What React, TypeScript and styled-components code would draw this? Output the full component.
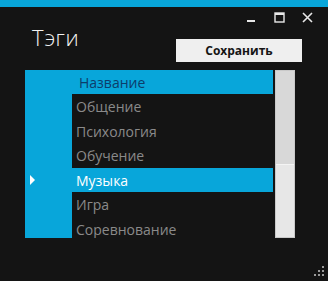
import React from 'react';
import styled, { createGlobalStyle } from 'styled-components';

const GlobalStyle = createGlobalStyle`
  html, body {
    margin: 0;
    padding: 0;
    background: #141414;
  }
  * {
    box-sizing: border-box;
  }
`;

const Window = styled.div`
  position: relative;
  width: 328px;
  height: 281px;
  background: #141414;
  display: flex;
  flex-direction: column;
  font-family: 'Open Sans', 'Noto Sans', sans-serif;
  overflow: hidden;
`;

const AccentBar = styled.div`
  height: 7px;
  background: #08a6da;
`;

const Controls = styled.div`
  display: flex;
  justify-content: flex-end;
  align-items: center;
  gap: 17px;
  height: 17px;
  padding: 4px 15px 0 0;
`;

const ControlButton = styled.div`
  width: 11px;
  height: 11px;
  display: flex;
  align-items: center;
  justify-content: center;
`;

const Header = styled.div`
  display: flex;
  justify-content: space-between;
  align-items: flex-start;
  padding: 0 26px 0 32px;
  height: 46px;
`;

const Title = styled.h1`
  margin: 0;
  font-family: 'Open Sans', 'Noto Sans', sans-serif;
  font-weight: 300;
  font-size: 22px;
  letter-spacing: 0.6px;
  line-height: 26px;
  color: #f2f2f2;
`;

const SaveButton = styled.button`
  margin-top: 15px;
  width: 126px;
  height: 23px;
  border: none;
  background: #efefef;
  color: #151515;
  font-family: 'Open Sans', 'Noto Sans', sans-serif;
  font-weight: 700;
  font-size: 12px;
  padding: 0;
  cursor: pointer;
`;

const ListArea = styled.div`
  display: flex;
  gap: 2px;
  margin-left: 25px;
  height: 168px;
`;

const Grid = styled.div`
  width: 248px;
  display: flex;
  flex-direction: column;
  overflow: hidden;
`;

const Row = styled.div<{ $height: number }>`
  display: flex;
  height: ${({ $height }) => $height}px;
  flex-shrink: 0;
`;

const RowHeader = styled.div`
  width: 47px;
  background: #08a6da;
  display: flex;
  align-items: center;
  padding-left: 5px;
`;

const Cell = styled.div<{ $variant: 'header' | 'selected' | 'normal' }>`
  flex: 1;
  display: flex;
  align-items: center;
  padding-left: ${({ $variant }) => ($variant === 'header' ? '7px' : '4px')};
  padding-top: 1px;
  font-size: 14px;
  background: ${({ $variant }) => ($variant === 'normal' ? '#141414' : '#08a6da')};
  color: ${({ $variant }) =>
    $variant === 'header' ? '#0d3d6b' : $variant === 'selected' ? '#ffffff' : '#8a8a8a'};
`;

const ScrollTrack = styled.div`
  width: 20px;
  background: #e7e7e7;
  border: 1px solid #c9c9c9;
  display: flex;
  flex-direction: column;
`;

const ScrollThumb = styled.div`
  height: 94px;
  background: #d8d8d8;
  border-bottom: 1px solid #f4f4f4;
`;

const Grip = styled.svg`
  position: absolute;
  right: 2px;
  bottom: 3px;
`;

const tags = ['Общение', 'Психология', 'Обучение', 'Музыка', 'Игра', 'Соревнование'];
const selected = 'Музыка';

const App: React.FC = () => {
  return (
    <Window>
      <GlobalStyle />
      <AccentBar />
      <Controls>
        <ControlButton>
          <svg width="11" height="11" viewBox="0 0 11 11">
            <rect x="1" y="8" width="8" height="2" fill="#e8e8e8" />
          </svg>
        </ControlButton>
        <ControlButton>
          <svg width="11" height="11" viewBox="0 0 11 11">
            <rect x="1" y="1" width="9" height="9" fill="none" stroke="#e8e8e8" strokeWidth="1.4" />
            <rect x="1" y="1" width="9" height="2" fill="#e8e8e8" />
          </svg>
        </ControlButton>
        <ControlButton>
          <svg width="11" height="11" viewBox="0 0 11 11">
            <path d="M1 1 L10 10 M10 1 L1 10" stroke="#e8e8e8" strokeWidth="1.6" />
          </svg>
        </ControlButton>
      </Controls>
      <Header>
        <Title>Тэги</Title>
        <SaveButton>Сохранить</SaveButton>
      </Header>
      <ListArea>
        <Grid>
          <Row $height={24}>
            <RowHeader />
            <Cell $variant="header">Название</Cell>
          </Row>
          {tags.map((tag) => (
            <Row key={tag} $height={24.5}>
              <RowHeader>
                {tag === selected && (
                  <svg width="6" height="10" viewBox="0 0 6 10">
                    <path d="M0 0 L5 5 L0 10 Z" fill="#ffffff" />
                  </svg>
                )}
              </RowHeader>
              <Cell $variant={tag === selected ? 'selected' : 'normal'}>{tag}</Cell>
            </Row>
          ))}
        </Grid>
        <ScrollTrack>
          <ScrollThumb />
        </ScrollTrack>
      </ListArea>
      <Grip width="14" height="14" viewBox="0 0 14 14">
        <rect x="10" y="2" width="2" height="2" fill="#9a9a9a" />
        <rect x="6" y="6" width="2" height="2" fill="#9a9a9a" />
        <rect x="10" y="6" width="2" height="2" fill="#9a9a9a" />
        <rect x="2" y="10" width="2" height="2" fill="#9a9a9a" />
        <rect x="6" y="10" width="2" height="2" fill="#9a9a9a" />
        <rect x="10" y="10" width="2" height="2" fill="#9a9a9a" />
      </Grip>
    </Window>
  );
};

export default App;
